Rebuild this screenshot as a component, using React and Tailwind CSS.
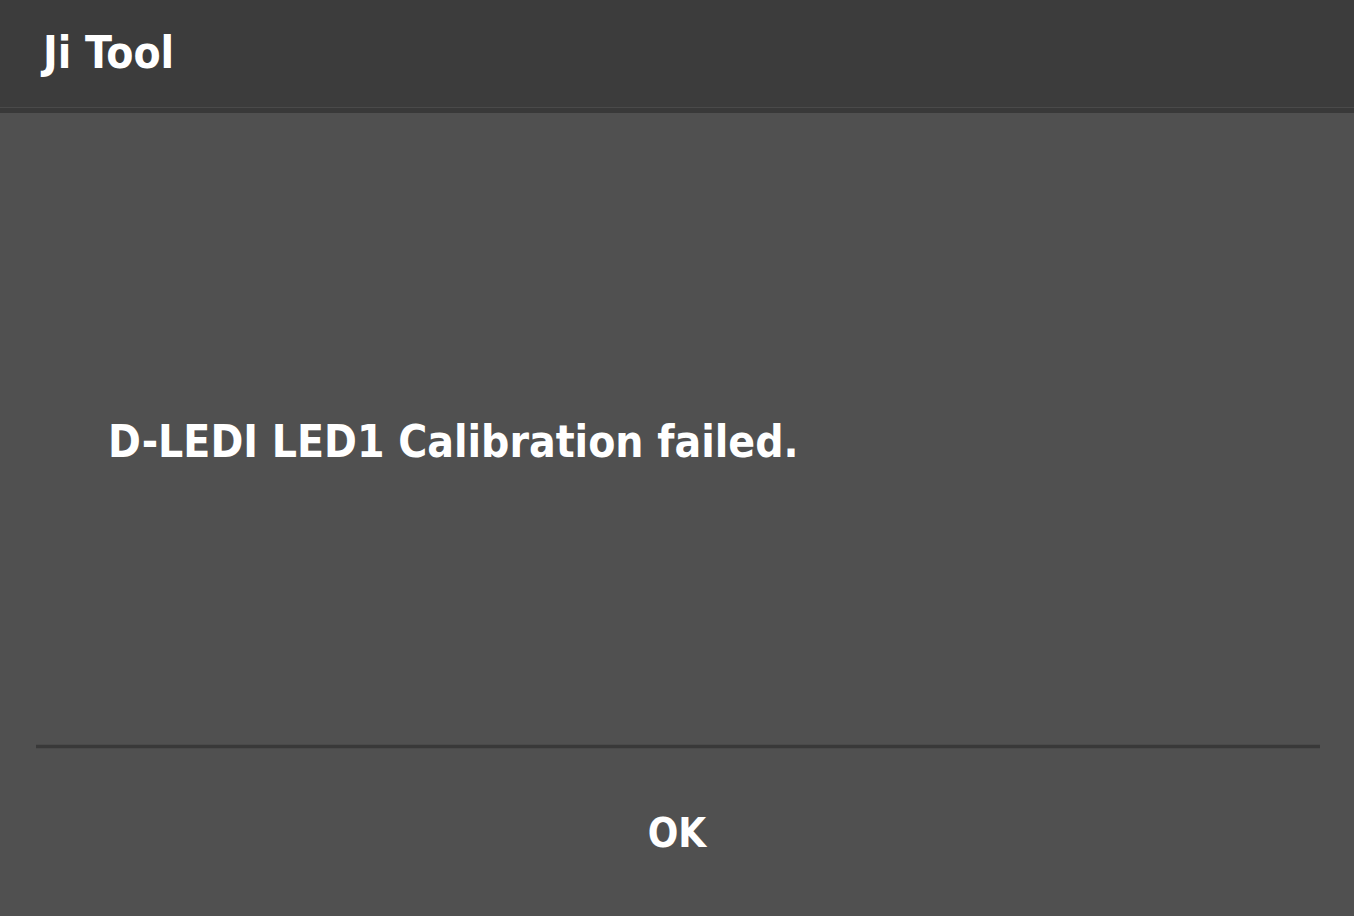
import React from "react";

export default function App() {
    return (
        <div className="w-[1354px] h-[916px] flex flex-col bg-[#505050] text-white overflow-hidden" style={{ fontFamily: '"DejaVu Sans Condensed", "DejaVu Sans", sans-serif' }}>
            {/* Barra de título */}
            <div className="h-[107px] shrink-0 bg-[#3c3c3c] flex items-center pl-[43px] pb-[2px]">
                <h1 className="text-[44px] font-bold leading-none">Ji Tool</h1>
            </div>
            <div className="h-[6px] shrink-0 border-t border-[#4a4a4a] bg-[#393939]" />

            {/* Mensaje */}
            <div className="flex-1 flex items-center pl-[108px] pt-[26px]">
                <p className="text-[44px] font-bold leading-none">D-LEDI LED1 Calibration failed.</p>
            </div>

            <div className="ml-[36px] mr-[34px] h-[5px] border-y border-[#4a4a4a] bg-[#393939]" />

            {/* Botón */}
            <div className="h-[167px] shrink-0 flex items-center justify-center">
                <button className="text-[40px] font-bold leading-none text-white">OK</button>
            </div>
        </div>
    );
}
